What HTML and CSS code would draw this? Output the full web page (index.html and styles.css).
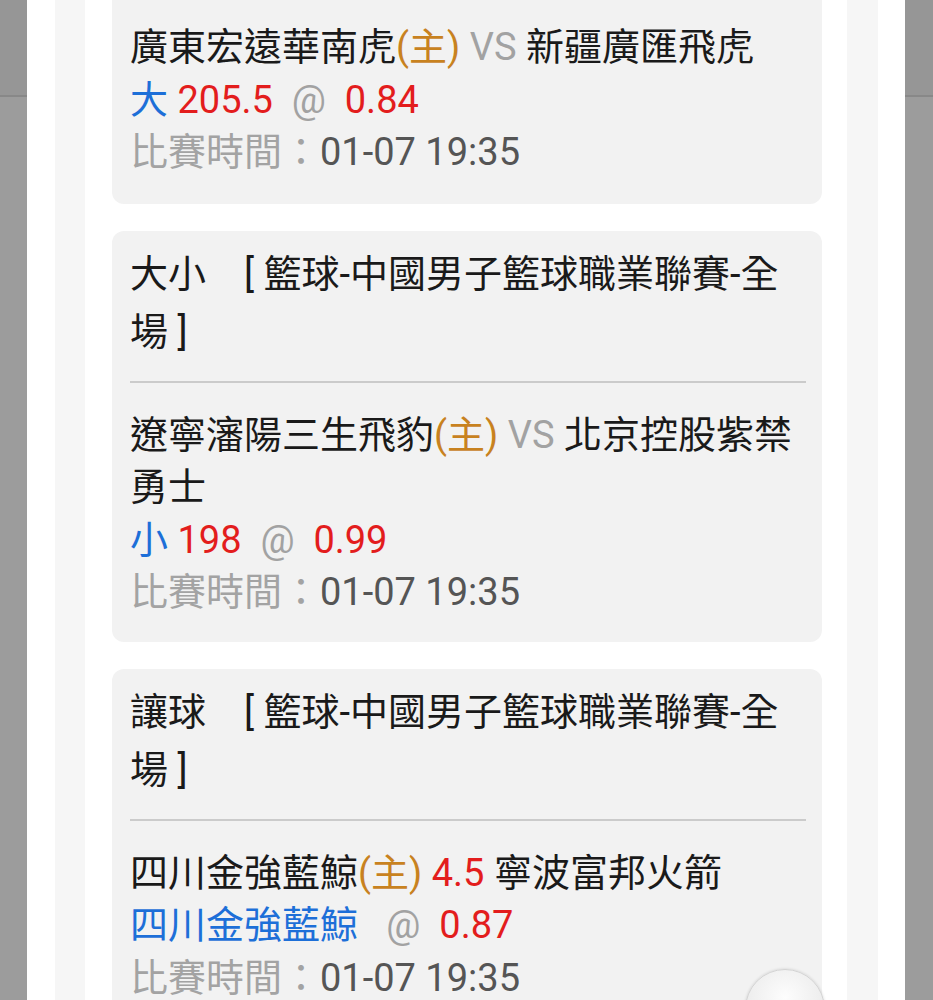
FILE: index.html
```html
<!DOCTYPE html>
<html lang="zh-Hant">
<head>
    <meta charset="UTF-8">
    <title>注單明細</title>
    <link rel="stylesheet" href="styles.css">
</head>
<body>
    <div class="sheet">
        <div class="strip">
            <div class="panel">

                <!-- 捲動後只露出下半部的注單 -->
                <div class="card card-cut">
                    <div class="card-body">
                        <div class="line"><span class="team">廣東宏遠華南虎</span><span class="home">(主)</span> <span class="vs">VS</span> <span class="team">新疆廣匯飛虎</span></div>
                        <div class="line"><span class="pick">大</span> <span class="num">205.5</span> &nbsp;<span class="at">@</span> &nbsp;<span class="num">0.84</span></div>
                        <div class="line"><span class="label">比賽時間：</span><span class="time">01-07 19:35</span></div>
                    </div>
                </div>

                <div class="card">
                    <div class="card-head"><span class="type">大小</span>[ 籃球-中國男子籃球職業聯賽-全場 ]</div>
                    <div class="card-body">
                        <div class="line"><span class="team">遼寧瀋陽三生飛豹</span><span class="home">(主)</span> <span class="vs">VS</span> <span class="team">北京控股紫禁勇士</span></div>
                        <div class="line"><span class="pick">小</span> <span class="num">198</span> &nbsp;<span class="at">@</span> &nbsp;<span class="num">0.99</span></div>
                        <div class="line"><span class="label">比賽時間：</span><span class="time">01-07 19:35</span></div>
                    </div>
                </div>

                <div class="card">
                    <div class="card-head"><span class="type">讓球</span>[ 籃球-中國男子籃球職業聯賽-全場 ]</div>
                    <div class="card-body">
                        <div class="line"><span class="team">四川金強藍鯨</span><span class="home">(主)</span> <span class="num">4.5</span> <span class="team">寧波富邦火箭</span></div>
                        <div class="line"><span class="pick">四川金強藍鯨</span> &nbsp;&nbsp;<span class="at">@</span> &nbsp;<span class="num">0.87</span></div>
                        <div class="line"><span class="label">比賽時間：</span><span class="time">01-07 19:35</span></div>
                    </div>
                </div>

            </div>
        </div>
    </div>

    <!-- 回到頂部 -->
    <button class="float-btn" type="button" aria-label="top"></button>
</body>
</html>
```

FILE: styles.css
```css
/* Fondo gris del overlay */
html, body {
    height: 100%;
}

body {
    margin: 0;
    overflow: hidden;
    font-family: Roboto, "Noto Sans CJK TC", sans-serif;
    font-size: 38px;
    color: #1a1a1a;
    background: linear-gradient(#969696 0, #969696 95px, #888 95px, #888 97px, #9c9c9c 97px);
}

/* Hoja blanca con franjas */
.sheet {
    height: 100%;
    margin: 0 28px 0 27px;
    padding: 0 27px 0 28px;
    background-color: #fff;
}

.strip {
    height: 100%;
    padding: 0 31px 0 30px;
    background-color: #f6f6f6;
}

.panel {
    height: 100%;
    padding: 0 25px 0 27px;
    background-color: #fff;
}

/* Tarjetas */
.card {
    margin-bottom: 27px;
    padding: 0 16px 0 18px;
    background-color: #f2f2f2;
    border-radius: 12px;
}

.card-cut {
    border-top-left-radius: 0;
    border-top-right-radius: 0;
}

.card-head {
    padding: 14px 0 20px;
    line-height: 58px;
    border-bottom: 2px solid #cbcbcb;
}

.type {
    margin-right: 38px;
}

.card-body {
    padding: 26px 0 23px;
    line-height: 52.5px;
}

.card-cut .card-body {
    padding: 21px 0 25px;
}

/* Colores del texto */
.home {
    color: #c8821f;
}

.vs,
.at {
    color: #a2a2a2;
}

.pick {
    color: #1d6fd8;
}

.num {
    color: #e31d1d;
}

.label {
    color: #a3a3a3;
}

.time {
    color: #555;
}

/* Botón flotante */
.float-btn {
    position: fixed;
    left: 745px;
    top: 969px;
    width: 80px;
    height: 80px;
    padding: 0;
    border: 1px solid #d2d2d2;
    border-radius: 50%;
    background: radial-gradient(circle at 50% 35%, #fdfdfd 0, #ededed 60%, #dcdcdc 100%);
    box-shadow: 0 0 3px rgba(0, 0, 0, 0.15);
}
```
